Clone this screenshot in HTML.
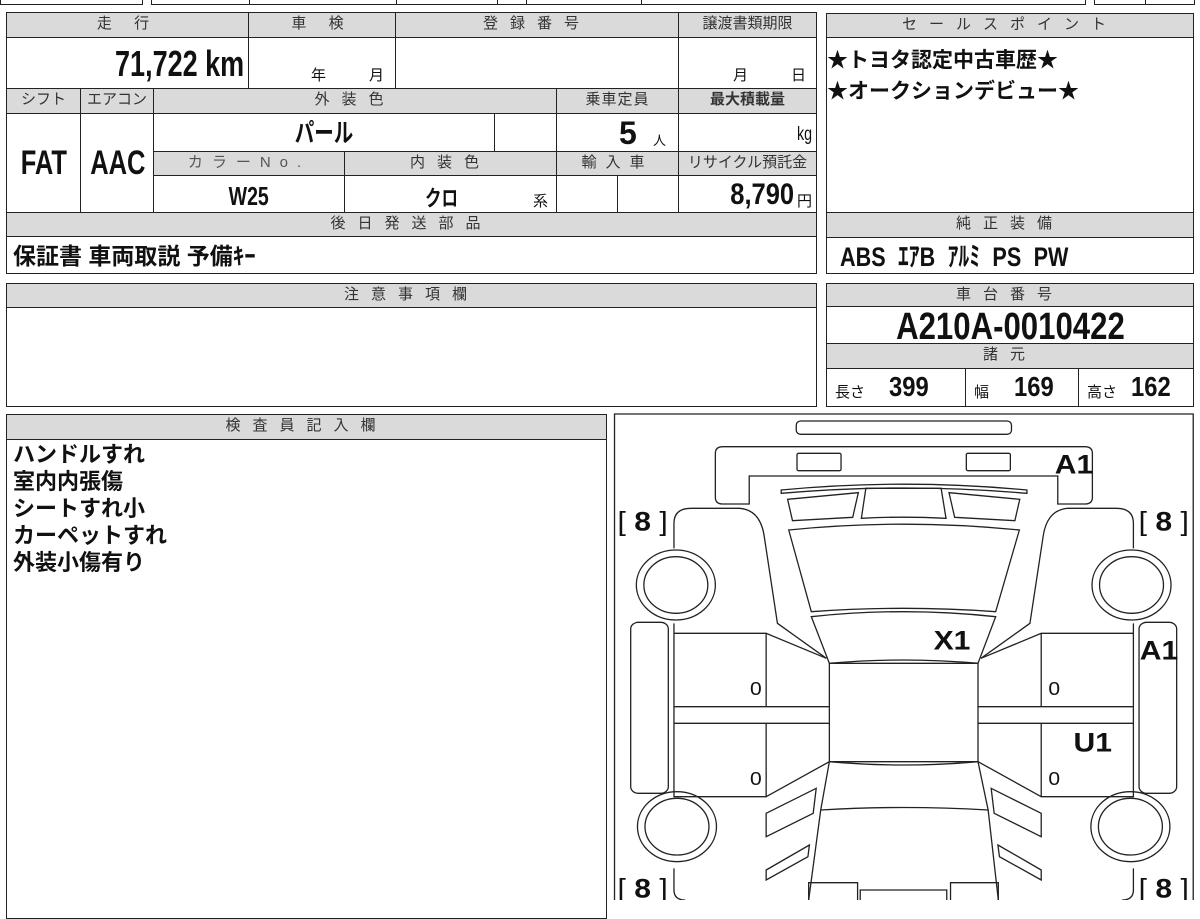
<!DOCTYPE html>
<html><head><meta charset="utf-8"><style>
body{margin:0;width:1200px;height:900px;overflow:hidden;background:#fff;font-family:"Liberation Sans","Noto Sans CJK JP",sans-serif;position:relative;color:#111}
.c{position:absolute;box-sizing:border-box;border:1.5px solid #222;background:#fff;overflow:hidden}
.h{background:#dadada;text-align:center;font-size:15px;letter-spacing:9px;color:#333;line-height:22px}
.b{font-weight:bold}
.a{position:absolute;white-space:nowrap}
.n{display:inline-block;transform:scaleX(.75);transform-origin:center}
.nl{display:inline-block;transform:scaleX(.75);transform-origin:left center}
.nr{display:inline-block;transform:scaleX(.75);transform-origin:right center}
</style></head><body>
<!-- top strip -->
<div class="c" style="left:0;top:-10px;width:143px;height:15px"></div>
<div class="c" style="left:151px;top:-10px;width:99px;height:15px"></div>
<div class="c" style="left:249px;top:-10px;width:148px;height:15px"></div>
<div class="c" style="left:396px;top:-10px;width:102px;height:15px"></div>
<div class="c" style="left:497px;top:-10px;width:30px;height:15px"></div>
<div class="c" style="left:526px;top:-10px;width:116px;height:15px"></div>
<div class="c" style="left:641px;top:-10px;width:445px;height:15px"></div>
<div class="c" style="left:1094px;top:-10px;width:52px;height:15px"></div>
<div class="c" style="left:1145px;top:-10px;width:50px;height:15px"></div>

<!-- left block -->
<div class="c h" style="left:6px;top:12px;width:243px;height:26px">走 行</div>
<div class="c h" style="left:248px;top:12px;width:148px;height:26px">車 検</div>
<div class="c h" style="left:395px;top:12px;width:284px;height:26px;letter-spacing:12px">登録番号</div>
<div class="c h" style="left:678px;top:12px;width:139px;height:26px;letter-spacing:0">譲渡書類期限</div>
<div class="c" style="left:6px;top:37px;width:243px;height:52px"><span class="a b" style="right:4px;top:5px;font-size:36px"><span class="nr">71,722 km</span></span></div>
<div class="c" style="left:248px;top:37px;width:148px;height:52px"><span class="a" style="left:62px;top:26px;font-size:15px">年</span><span class="a" style="left:120px;top:26px;font-size:15px">月</span></div>
<div class="c" style="left:395px;top:37px;width:284px;height:52px"></div>
<div class="c" style="left:678px;top:37px;width:139px;height:52px"><span class="a" style="left:54px;top:26px;font-size:15px">月</span><span class="a" style="left:112px;top:26px;font-size:15px">日</span></div>

<div class="c h" style="left:6px;top:88px;width:75px;height:26px;letter-spacing:0">シフト</div>
<div class="c h" style="left:80px;top:88px;width:74px;height:26px;letter-spacing:0">エアコン</div>
<div class="c h" style="left:153px;top:88px;width:404px;height:26px;letter-spacing:12px">外装色</div>
<div class="c h" style="left:556px;top:88px;width:123px;height:26px;letter-spacing:1px">乗車定員</div>
<div class="c h" style="left:678px;top:88px;width:139px;height:26px;letter-spacing:0;font-weight:bold">最大積載量</div>
<div class="c b" style="left:6px;top:113px;width:75px;height:100px;text-align:center;line-height:98px;font-size:34px"><span class="n">FAT</span></div>
<div class="c b" style="left:80px;top:113px;width:74px;height:100px;text-align:center;line-height:98px;font-size:34px"><span class="n">AAC</span></div>
<div class="c b" style="left:153px;top:113px;width:342px;height:39px;text-align:center;line-height:38px;font-size:26px"><span class="n">パール</span></div>
<div class="c" style="left:494px;top:113px;width:63px;height:39px"></div>
<div class="c" style="left:556px;top:113px;width:123px;height:39px"><span class="a b" style="left:62px;top:1px;font-size:32px">5</span><span class="a" style="left:96px;top:16px;font-size:13px">人</span></div>
<div class="c" style="left:678px;top:113px;width:139px;height:39px"><span class="a" style="right:4px;top:10px;font-size:19px"><span class="nr">kg</span></span></div>
<div class="c h" style="left:153px;top:151px;width:192px;height:25px;letter-spacing:9px;color:#555">カラーNo.</div>
<div class="c h" style="left:344px;top:151px;width:213px;height:25px;letter-spacing:12px">内装色</div>
<div class="c h" style="left:556px;top:151px;width:123px;height:25px">輸入車</div>
<div class="c h" style="left:678px;top:151px;width:139px;height:25px;letter-spacing:0">リサイクル預託金</div>
<div class="c b" style="left:153px;top:175px;width:192px;height:38px;text-align:center;line-height:40px;font-size:26px"><span class="n">W25</span></div>
<div class="c" style="left:344px;top:175px;width:213px;height:38px"><span class="a b" style="left:80px;top:5px;font-size:22px"><span class="nl">クロ</span></span><span class="a" style="left:188px;top:14px;font-size:15px">系</span></div>
<div class="c" style="left:556px;top:175px;width:62px;height:38px"></div>
<div class="c" style="left:617px;top:175px;width:62px;height:38px"></div>
<div class="c" style="left:678px;top:175px;width:139px;height:38px"><span class="a b" style="right:22px;top:2px;font-size:30px"><span class="nr" style="transform:scaleX(.85)">8,790</span></span><span class="a" style="right:4px;top:14px;font-size:15px">円</span></div>
<div class="c h" style="left:6px;top:212px;width:811px;height:25px;letter-spacing:12px">後日発送部品</div>
<div class="c b" style="left:6px;top:236px;width:811px;height:38px;font-size:23px;line-height:38px;padding-left:6px">保証書 車両取説 予備ｷｰ</div>

<!-- right top -->
<div class="c h" style="left:826px;top:13px;width:368px;height:25px;letter-spacing:12px">セールスポイント</div>
<div class="c" style="left:826px;top:37px;width:368px;height:176px;font-weight:bold;font-size:21px;line-height:31px;padding-top:7px">★トヨタ認定中古車歴★<br>★オークションデビュー★</div>
<div class="c h" style="left:826px;top:212px;width:368px;height:26px;letter-spacing:12px">純正装備</div>
<div class="c b" style="left:826px;top:237px;width:368px;height:37px;font-size:27px;line-height:38px;padding-left:13px;word-spacing:8px"><span class="nl" style="transform:scaleX(.8)">ABS ｴｱB ｱﾙﾐ PS PW</span></div>

<!-- row 2 -->
<div class="c h" style="left:6px;top:283px;width:811px;height:25px;letter-spacing:12px">注意事項欄</div>
<div class="c" style="left:6px;top:307px;width:811px;height:100px"></div>
<div class="c h" style="left:826px;top:283px;width:368px;height:24px;letter-spacing:12px">車台番号</div>
<div class="c b" style="left:826px;top:306px;width:368px;height:38px;text-align:center;font-size:38px;line-height:40px"><span class="n" style="transform:scaleX(.82)">A210A-0010422</span></div>
<div class="c h" style="left:826px;top:343px;width:368px;height:26px;letter-spacing:12px">諸元</div>
<div class="c" style="left:826px;top:368px;width:140px;height:39px"><span class="a" style="left:8px;top:12px;font-size:15px">長さ</span><span class="a b" style="left:62px;top:2px;font-size:28px"><span class="nl" style="transform:scaleX(.85)">399</span></span></div>
<div class="c" style="left:965px;top:368px;width:114px;height:39px"><span class="a" style="left:8px;top:12px;font-size:15px">幅</span><span class="a b" style="left:48px;top:2px;font-size:28px"><span class="nl" style="transform:scaleX(.85)">169</span></span></div>
<div class="c" style="left:1078px;top:368px;width:116px;height:39px"><span class="a" style="left:8px;top:12px;font-size:15px">高さ</span><span class="a b" style="left:52px;top:2px;font-size:28px"><span class="nl" style="transform:scaleX(.85)">162</span></span></div>

<!-- inspector -->
<div class="c h" style="left:6px;top:414px;width:601px;height:26px;letter-spacing:12px">検査員記入欄</div>
<div class="c" style="left:6px;top:439px;width:601px;height:480px;font-weight:bold;font-size:22px;line-height:27px;padding:1px 0 0 6px">ハンドルすれ<br>室内内張傷<br>シートすれ小<br>カーペットすれ<br>外装小傷有り</div>

<!-- car diagram -->
<svg style="position:absolute;left:610px;top:410px" width="590" height="490" viewBox="0 0 1568 1470" preserveAspectRatio="none">
<g fill="none" stroke="#222" stroke-width="1.3">
<rect x="12" y="12" width="1538" height="1500" vector-effect="non-scaling-stroke"/>
<rect x="495" y="33" width="572" height="40" rx="12" vector-effect="non-scaling-stroke"/>
<path vector-effect="non-scaling-stroke" d="M370 282 L300 282 Q280 282 280 262 L280 130 Q280 110 300 110 L1262 110 Q1282 110 1282 130 L1282 262 Q1282 282 1262 282 L1190 282 L1190 198 L370 198 Z"/>
<rect x="497" y="130" width="117" height="52" rx="4" vector-effect="non-scaling-stroke"/>
<rect x="947" y="130" width="117" height="52" rx="4" vector-effect="non-scaling-stroke"/>
<path vector-effect="non-scaling-stroke" d="M455 240 Q780 205 1108 240 L1108 250 Q780 218 455 250 Z"/>
<path vector-effect="non-scaling-stroke" d="M668 325 L680 235 L880 235 L893 325 Q780 318 668 325 Z"/>
<path vector-effect="non-scaling-stroke" d="M475 360 Q780 325 1088 360 L1025 605 Q780 585 535 605 Z"/>
<path vector-effect="non-scaling-stroke" d="M535 620 Q780 590 1025 620 L978 760 Q780 740 583 760 Z"/>
<rect x="583" y="760" width="395" height="295" vector-effect="non-scaling-stroke"/>
<path vector-effect="non-scaling-stroke" d="M583 1055 Q780 1075 978 1055 L1005 1200 Q780 1185 560 1200 Z"/>
<path vector-effect="non-scaling-stroke" d="M560 1200 L528 1470 M1005 1200 L1032 1470"/>
<path vector-effect="non-scaling-stroke" d="M528 1470 L528 1418 L658 1418 L658 1470 M905 1470 L905 1418 L1032 1418 L1032 1470 M665 1470 L665 1440 L895 1440 L895 1470"/>
<g id="half">
<path vector-effect="non-scaling-stroke" d="M472 268 L660 248 L645 322 L485 332 Z"/>
<path vector-effect="non-scaling-stroke" d="M170 415 L170 340 Q170 295 215 295 L345 295 Q400 300 410 380 L445 640 L575 745"/>
<path vector-effect="non-scaling-stroke" d="M170 640 L170 670 L415 670 L575 745 M415 670 L415 890 M170 890 L583 890 M170 940 L583 940 M415 940 L415 1160 L170 1160 L170 1150 M415 1160 L583 1055 M170 670 L170 1160"/>
<circle cx="175" cy="525" r="105" vector-effect="non-scaling-stroke"/><circle cx="175" cy="525" r="85" vector-effect="non-scaling-stroke"/>
<circle cx="178" cy="1250" r="105" vector-effect="non-scaling-stroke"/><circle cx="178" cy="1250" r="85" vector-effect="non-scaling-stroke"/>
<rect x="55" y="637" width="100" height="513" rx="20" vector-effect="non-scaling-stroke"/>
<path vector-effect="non-scaling-stroke" d="M415 1210 L548 1135 L540 1210 L415 1280 Z"/>
<path vector-effect="non-scaling-stroke" d="M415 1380 L530 1305 L526 1340 L415 1410 Z"/>
<path vector-effect="non-scaling-stroke" d="M170 1375 L170 1440 Q170 1470 200 1470"/>
</g>
<use href="#half" transform="translate(1561,0) scale(-1,1)"/>
</g>
<g font-family="Liberation Sans, sans-serif" font-weight="bold" fill="#111" font-size="80">
<text x="1182" y="190">A1</text>
<text x="860" y="718">X1</text>
<text x="1408" y="748">A1</text>
<text x="1232" y="1025">U1</text>
<text x="20" y="362" font-weight="normal">[ <tspan font-weight="bold">8</tspan> ]</text>
<text x="1405" y="362" font-weight="normal">[ <tspan font-weight="bold">8</tspan> ]</text>
<text x="20" y="1462" font-weight="normal">[ <tspan font-weight="bold">8</tspan> ]</text>
<text x="1405" y="1462" font-weight="normal">[ <tspan font-weight="bold">8</tspan> ]</text>
<g font-size="56" font-weight="normal"><text x="372" y="855">0</text><text x="372" y="1125">0</text><text x="1165" y="855">0</text><text x="1165" y="1125">0</text></g>
</g>
</svg>
</body></html>
